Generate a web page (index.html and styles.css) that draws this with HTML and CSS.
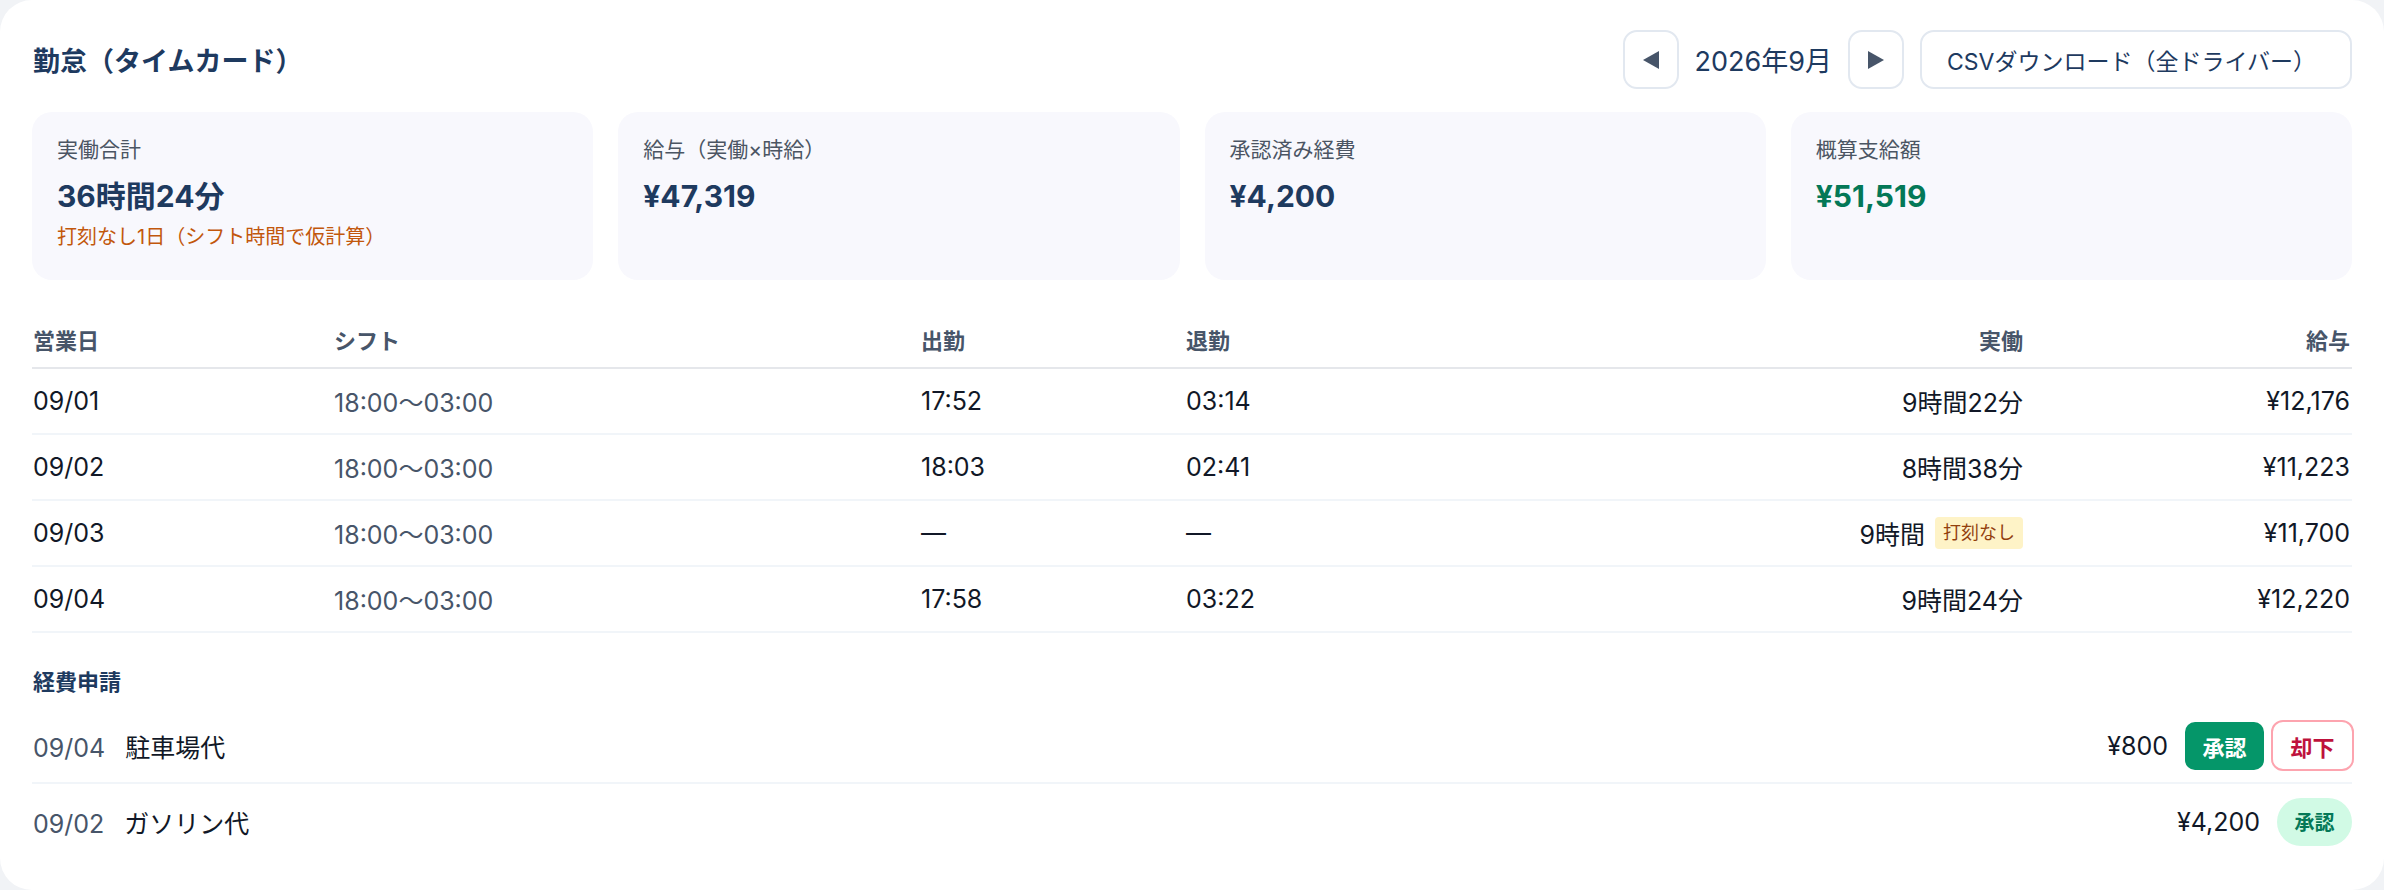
FILE: index.html
```html
<!DOCTYPE html>
<html lang="ja">
<head>
<meta charset="utf-8">
<title>勤怠（タイムカード）</title>
<link rel="stylesheet" href="styles.css">
</head>
<body>
<div class="card">
  <div class="head">
    <h1 class="title">勤怠（タイムカード）</h1>
    <div class="controls">
      <button class="nav-btn" aria-label="前月"><svg width="18" height="18" viewBox="0 0 18 18"><polygon points="17,0 17,18 1,9" fill="#475569"/></svg></button>
      <span class="month">2026年9月</span>
      <button class="nav-btn" aria-label="翌月"><svg width="18" height="18" viewBox="0 0 18 18"><polygon points="1,0 1,18 17,9" fill="#475569"/></svg></button>
      <button class="csv-btn">CSVダウンロード（全ドライバー）</button>
    </div>
  </div>

  <div class="stats">
    <div class="stat">
      <div class="stat-label">実働合計</div>
      <div class="stat-value">36時間24分</div>
      <div class="stat-note">打刻なし1日（シフト時間で仮計算）</div>
    </div>
    <div class="stat">
      <div class="stat-label">給与（実働×時給）</div>
      <div class="stat-value">¥47,319</div>
    </div>
    <div class="stat">
      <div class="stat-label">承認済み経費</div>
      <div class="stat-value">¥4,200</div>
    </div>
    <div class="stat">
      <div class="stat-label">概算支給額</div>
      <div class="stat-value green">¥51,519</div>
    </div>
  </div>

  <div class="table">
    <div class="tr th">
      <div>営業日</div><div>シフト</div><div>出勤</div><div>退勤</div><div class="r">実働</div><div class="r">給与</div>
    </div>
    <div class="tr">
      <div>09/01</div><div class="muted">18:00〜03:00</div><div>17:52</div><div>03:14</div><div class="r">9時間22分</div><div class="r">¥12,176</div>
    </div>
    <div class="tr">
      <div>09/02</div><div class="muted">18:00〜03:00</div><div>18:03</div><div>02:41</div><div class="r">8時間38分</div><div class="r">¥11,223</div>
    </div>
    <div class="tr">
      <div>09/03</div><div class="muted">18:00〜03:00</div><div>—</div><div>—</div><div class="r">9時間<span class="badge">打刻なし</span></div><div class="r">¥11,700</div>
    </div>
    <div class="tr">
      <div>09/04</div><div class="muted">18:00〜03:00</div><div>17:58</div><div>03:22</div><div class="r">9時間24分</div><div class="r">¥12,220</div>
    </div>
  </div>

  <h2 class="sub">経費申請</h2>
  <div class="expenses">
    <div class="exp">
      <div class="exp-left"><span class="exp-date">09/04</span><span>駐車場代</span></div>
      <div class="exp-right"><span class="amount">¥800</span><button class="btn-approve">承認</button><button class="btn-reject">却下</button></div>
    </div>
    <div class="exp">
      <div class="exp-left"><span class="exp-date">09/02</span><span>ガソリン代</span></div>
      <div class="exp-right"><span class="amount">¥4,200</span><span class="pill">承認</span></div>
    </div>
  </div>
</div>
</body>
</html>
```

FILE: styles.css
```css
html {
  background: #f1f3f6;
}
body {
  margin: 0;
  font-family: "Inter", "Noto Sans CJK JP", sans-serif;
  color: #111827;
}
.card {
  box-sizing: border-box;
  width: 2384px;
  height: 890px;
  background: #ffffff;
  border-radius: 32px;
  padding: 30px 32px 30px 32px;
}
.head {
  display: flex;
  align-items: center;
  justify-content: space-between;
  height: 59px;
}
.title {
  margin: 0;
  font-size: 27px;
  font-weight: 700;
  color: #1e3a5f;
  padding-left: 1px;
}
.controls {
  display: flex;
  align-items: center;
  gap: 16px;
}
.nav-btn {
  box-sizing: border-box;
  width: 56px;
  height: 59px;
  border: 2px solid #e2e8f0;
  border-radius: 14px;
  background: #fff;
  display: flex;
  align-items: center;
  justify-content: center;
  padding: 0;
}
.month {
  font-size: 27px;
  color: #1e3a5f;
}
.csv-btn {
  box-sizing: border-box;
  width: 432px;
  height: 59px;
  border: 2px solid #e2e8f0;
  border-radius: 14px;
  background: #fff;
  padding: 0 0 0 25px;
  text-align: left;
  font-family: inherit;
  font-size: 23px;
  color: #1e3a5f;
}
.stats {
  display: grid;
  grid-template-columns: repeat(4, 1fr);
  gap: 25px;
  margin-top: 23px;
}
.stat {
  box-sizing: border-box;
  height: 168px;
  background: #f8f8fd;
  border-radius: 20px;
  padding: 22px 25px;
}
.stat-label {
  font-size: 21px;
  color: #4b5563;
  line-height: 32px;
}
.stat-value {
  font-size: 30px;
  font-weight: 700;
  color: #1e3a5f;
  line-height: 44px;
  margin-top: 8px;
}
.stat-value.green {
  color: #047857;
}
.stat-note {
  font-size: 20px;
  color: #c2570c;
  line-height: 30px;
  margin-top: 4px;
}
.table {
  margin-top: 30px;
}
.tr {
  display: grid;
  grid-template-columns: 301px 587px 265px 420px 420px 327px;
  align-items: center;
  height: 66px;
  box-sizing: border-box;
  border-bottom: 2px solid #f1f5f9;
  font-size: 25px;
  color: #111827;
}
.tr.th {
  height: 59px;
  border-bottom-color: #e5e7eb;
  font-size: 22px;
  font-weight: 600;
  color: #475569;
}
.tr > div {
  padding-left: 1px;
}
.tr .r {
  text-align: right;
  padding-right: 2px;
  display: flex;
  justify-content: flex-end;
  align-items: center;
}
.muted {
  color: #475569;
}
.badge {
  display: inline-block;
  margin-left: 10px;
  background: #fef3c7;
  color: #92400e;
  font-size: 18px;
  line-height: 32px;
  padding: 0 8px;
  border-radius: 4px;
}
.sub {
  margin: 34px 0 12px;
  font-size: 22px;
  font-weight: 700;
  line-height: 30px;
  color: #1e3a5f;
  padding-left: 1px;
}
.exp {
  display: flex;
  align-items: center;
  justify-content: space-between;
  height: 75px;
  box-sizing: border-box;
  border-bottom: 2px solid #f1f5f9;
  font-size: 25px;
}
.exp:last-child {
  border-bottom: none;
}
.exp-left {
  display: flex;
  align-items: baseline;
  gap: 20px;
  padding-left: 1px;
}
.exp-date {
  color: #475569;
}
.exp-right {
  display: flex;
  align-items: center;
}
.amount {
  margin-right: 17px;
}
.btn-approve {
  box-sizing: border-box;
  width: 79px;
  height: 48px;
  border: none;
  border-radius: 10px;
  background: #059669;
  color: #fff;
  font-family: inherit;
  font-size: 22px;
  font-weight: 700;
  padding: 0;
  margin-right: 7px;
}
.btn-reject {
  box-sizing: border-box;
  width: 83px;
  height: 51px;
  border: 2px solid #fda4af;
  border-radius: 12px;
  background: #fff;
  color: #be123c;
  font-family: inherit;
  font-size: 22px;
  font-weight: 700;
  padding: 0;
  margin-right: -2px;
}
.pill {
  display: inline-flex;
  align-items: center;
  justify-content: center;
  width: 75px;
  height: 48px;
  border-radius: 24px;
  background: #d1fae5;
  color: #047857;
  font-size: 20px;
  font-weight: 700;
}
```
